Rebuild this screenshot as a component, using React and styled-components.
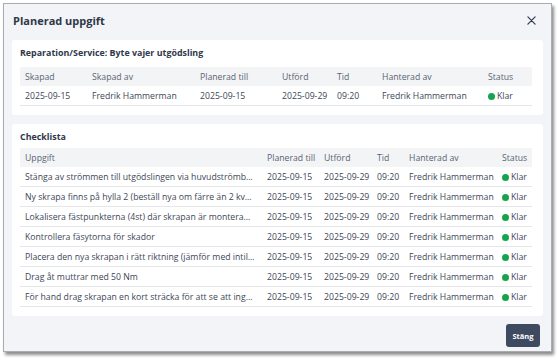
import React from "react";
import styled, { createGlobalStyle } from "styled-components";

const Global = createGlobalStyle`
  body {
    margin: 0;
    background: #ffffff;
    font-family: "Open Sans", "Noto Sans", sans-serif;
  }
`;

const Page = styled.div`
  padding: 3px 0 0 3px;
  width: 558px;
  height: 363px;
  box-sizing: border-box;
`;

const Modal = styled.div`
  width: 549px;
  height: 349px;
  box-sizing: border-box;
  background: #f3f4f7;
  border: 1px solid #a9abb0;
  box-shadow: 2px 3px 3px rgba(0, 0, 0, 0.45);
  display: flex;
  flex-direction: column;
  padding: 0 8px;
`;

const Header = styled.div`
  height: 36px;
  box-sizing: border-box;
  display: flex;
  align-items: center;
  justify-content: space-between;
  padding: 0 6px 3px 1px;
`;

const Title = styled.h2`
  margin: 0;
  font-size: 11px;
  font-weight: 700;
  color: #2e3848;
`;

const Close = styled.button`
  border: none;
  background: none;
  padding: 0;
  width: 12px;
  height: 12px;
  display: flex;
  align-items: center;
  justify-content: center;
  color: #2e3848;
`;

const Card = styled.section`
  background: #ffffff;
  border-radius: 3px;
  padding: 6px 12px 9px 8px;
  margin-bottom: ${(p) => p.$gap || 0}px;
`;

const CardTitle = styled.h3`
  margin: 0 0 ${(p) => p.$space}px 0;
  font-size: 8.9px;
  font-weight: 700;
  color: #2e3848;
  line-height: 14px;
`;

const Table = styled.table`
  width: 100%;
  border-collapse: collapse;
  table-layout: fixed;
  font-size: 8.7px;
  color: #3c4656;
`;

const Th = styled.th`
  background: #f3f4f6;
  font-weight: 400;
  text-align: left;
  height: 19px;
  padding: 0 0 0 5px;
  color: #5a6372;
  white-space: nowrap;
`;

const Td = styled.td`
  height: 19px;
  padding: 0 ${(p) => (p.$wrapPad ? 7 : 2)}px 0 5px;
  border-bottom: 1px solid #e4e6ea;
  white-space: nowrap;
  overflow: hidden;
  text-overflow: ellipsis;
`;

const Dot = styled.span`
  display: inline-block;
  width: 7px;
  height: 7px;
  border-radius: 50%;
  background: #14a44d;
  margin-right: 2px;
  vertical-align: -1px;
`;

const Footer = styled.div`
  display: flex;
  justify-content: flex-end;
  padding: 8px 3px 0 0;
`;

const Button = styled.button`
  background: #3e4a5f;
  color: #ffffff;
  border: none;
  border-radius: 3px;
  font-family: inherit;
  font-size: 7.5px;
  font-weight: 700;
  width: 34px;
  height: 23px;
  padding: 0;
`;

const planned = {
  cols: [67, 108, 82, 55, 45, 106, 49],
  head: ["Skapad", "Skapad av", "Planerad till", "Utförd", "Tid", "Hanterad av", "Status"],
  row: ["2025-09-15", "Fredrik Hammerman", "2025-09-15", "2025-09-29", "09:20", "Fredrik Hammerman"],
};

const checklistCols = [242, 57, 53, 32, 93, 35];
const checklistHead = ["Uppgift", "Planerad till", "Utförd", "Tid", "Hanterad av", "Status"];
const tasks = [
  "Stänga av strömmen till utgödslingen via huvudströmbrytaren",
  "Ny skrapa finns på hylla 2 (beställ nya om färre än 2 kvar i lager)",
  "Lokalisera fästpunkterna (4st) där skrapan är monterad på vajern",
  "Kontrollera fäsytorna för skador",
  "Placera den nya skrapan i rätt riktning (jämför med intilliggande)",
  "Drag åt muttrar med 50 Nm",
  "För hand drag skrapan en kort sträcka för att se att inget fastnar",
];

function DataTable({ cols, head, rows, firstWide }) {
  return (
    <Table>
      <colgroup>
        {cols.map((w, i) => (
          <col key={i} style={{ width: w }} />
        ))}
      </colgroup>
      <thead>
        <tr>
          {head.map((h) => (
            <Th key={h}>{h}</Th>
          ))}
        </tr>
      </thead>
      <tbody>
        {rows.map((r, i) => (
          <tr key={i}>
            {r.map((c, j) => (
              <Td key={j} $wrapPad={firstWide && j === 0}>
                {c}
              </Td>
            ))}
            <Td>
              <Dot />
              Klar
            </Td>
          </tr>
        ))}
      </tbody>
    </Table>
  );
}

export default function App() {
  return (
    <Page>
      <Global />
      <Modal>
        <Header>
          <Title>Planerad uppgift</Title>
          <Close aria-label="Stäng">
            <svg width="9" height="9" viewBox="0 0 10 10">
              <path d="M1 1L9 9M9 1L1 9" stroke="currentColor" strokeWidth="1.3" strokeLinecap="round" />
            </svg>
          </Close>
        </Header>
        <Card $gap={9}>
          <CardTitle $space={7}>Reparation/Service: Byte vajer utgödsling</CardTitle>
          <DataTable cols={planned.cols} head={planned.head} rows={[planned.row]} />
        </Card>
        <Card>
          <CardTitle $space={4}>Checklista</CardTitle>
          <DataTable
            firstWide
            cols={checklistCols}
            head={checklistHead}
            rows={tasks.map((t) => [t, "2025-09-15", "2025-09-29", "09:20", "Fredrik Hammerman"])}
          />
        </Card>
        <Footer>
          <Button>Stäng</Button>
        </Footer>
      </Modal>
    </Page>
  );
}
